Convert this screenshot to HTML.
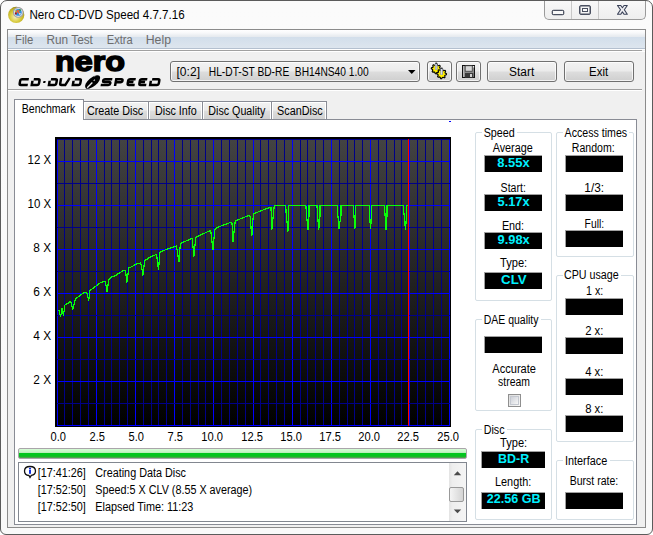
<!DOCTYPE html>
<html><head><meta charset="utf-8">
<style>
*{margin:0;padding:0;box-sizing:border-box}
html,body{width:653px;height:535px;overflow:hidden;background:#fff}
body{position:relative;font-family:"Liberation Sans",sans-serif;font-size:11px;color:#000}
.a{position:absolute}
#frame{left:0;top:0;width:653px;height:535px;border:1px solid #5b5b5b;border-radius:7px 7px 6px 6px;background:linear-gradient(#fbfbfb,#f9f9f9)}
#client{left:7px;top:29px;width:639px;height:499px;border:1px solid #8b8b8b;background:#f0f0f0}
#menubar{left:8px;top:30px;width:637px;height:18px;background:linear-gradient(#ffffff 0px,#f7f8fa 3px,#e8ecf0 6px,#e6eaef 7px,#d2deeb 7px,#d6e1ec 11px,#dde5ee 18px)}
.btn{position:absolute;border:1px solid #707070;border-radius:3px;background:linear-gradient(#f2f2f2 0%,#ebebeb 48%,#dddddd 52%,#cfcfcf 100%);box-shadow:inset 0 0 0 1px rgba(255,255,255,.75)}
.tab{position:absolute;border:1px solid #898c95;border-bottom:none;background:linear-gradient(#f2f2f2 0%,#ebebeb 45%,#dddddd 52%,#cfcfcf 100%);box-shadow:inset 1px 1px 0 #fff, inset -1px 0 0 #fff}
.grp{position:absolute;border:1px solid #d5dfe5;border-radius:2px}
.lgd{position:absolute;background:#fff;height:8px}
.blk{position:absolute;background:#000;border-top:1px solid #a0a0a0;border-left:1px solid #a0a0a0}
</style></head><body>
<div id="frame" class="a"></div>
<!-- caption buttons -->
<div class="a" style="left:544px;top:1px;width:102px;height:19px;border:1px solid #9a9a9a;border-top:none;border-radius:0 0 5px 5px;background:linear-gradient(#f8f8f8,#eeeeee)"></div>
<div class="a" style="left:571px;top:1px;width:1px;height:18px;background:#c8c8c8"></div>
<div class="a" style="left:598px;top:1px;width:1px;height:18px;background:#c8c8c8"></div>
<div class="a" style="left:552px;top:10px;width:12px;height:5px;border:1px solid #4a5060;border-radius:1.5px;background:#f8f8f8;box-shadow:0 0 0 0.3px #4a5060"></div>
<div class="a" style="left:579px;top:5px;width:12px;height:10px;border:1px solid #4a5060;border-radius:2px;background:#f4f4f4;box-shadow:inset 0 0 0 0.5px #4a5060"></div>
<div class="a" style="left:582px;top:8px;width:6px;height:4px;border:1px solid #4a5060;background:#fafafa"></div>
<svg class="a" style="left:0;top:0" width="653" height="30"><path d="M617.5,5.5 H620.8 L622.4,7.7 L624,5.5 H627.3 L624.3,9.8 L627.3,14.2 H624 L622.4,11.9 L620.8,14.2 H617.5 L620.5,9.8 Z" fill="#eeeef2" stroke="#3a4258" stroke-width="1.1" stroke-linejoin="round"/></svg>
<!-- app icon -->
<svg class="a" style="left:0;top:0" width="30" height="30">
<defs><radialGradient id="gold" cx="0.45" cy="0.62" r="0.6"><stop offset="0" stop-color="#f6f0c0"/><stop offset="0.5" stop-color="#dccf48"/><stop offset="0.85" stop-color="#c0b020"/><stop offset="1" stop-color="#9a8a18"/></radialGradient></defs>
<circle cx="16.2" cy="14.9" r="8.1" fill="url(#gold)"/>
<circle cx="18.3" cy="12.4" r="4.8" fill="#eeeef0" stroke="#a0a0a8" stroke-width="1.1"/>
<circle cx="18.3" cy="12.4" r="3.4" fill="#2e8ee0"/>
<path d="M17,10 L19.8,14.2 M15.8,12.8 L19.6,10.2" stroke="#f06030" stroke-width="1.3"/>
<circle cx="15.8" cy="13.6" r="1" fill="#b01010"/>
<circle cx="15.6" cy="11.3" r="0.7" fill="#f0d000"/>
<path d="M19.2,9.6 L21,10.4" stroke="#30a040" stroke-width="1.2"/>
<circle cx="19.9" cy="13.9" r="0.8" fill="#ffffff"/>
</svg>
<div id="client" class="a"></div>
<div id="menubar" class="a"></div>
<div class="a" style="left:8px;top:48px;width:637px;height:1px;background:#b4c0cf"></div>
<div class="a" style="left:8px;top:49px;width:637px;height:1px;background:#fff"></div>
<div class="a" style="left:8px;top:50px;width:634px;height:1px;background:#a0a0a0"></div>
<div class="a" style="left:8px;top:51px;width:637px;height:1px;background:#fff"></div>
<!-- combo & buttons -->
<div class="btn" style="left:170px;top:61px;width:250px;height:21px"></div>
<svg class="a" style="left:408px;top:70px" width="9" height="5"><path d="M0 0 L7.5 0 L3.75 4 Z" fill="#000"/></svg>
<div class="btn" style="left:427px;top:61px;width:25px;height:21px"></div>
<div class="btn" style="left:456px;top:61px;width:25px;height:21px"></div>
<div class="btn" style="left:487px;top:61px;width:70px;height:21px"></div>
<div class="btn" style="left:564px;top:61px;width:70px;height:21px"></div>
<!-- separator -->
<div class="a" style="left:8px;top:89px;width:634px;height:1px;background:#a0a0a0"></div>
<div class="a" style="left:8px;top:90px;width:634px;height:1px;background:#fff"></div>
<!-- tabs -->
<div class="tab" style="left:83px;top:101px;width:66px;height:19px"></div>
<div class="tab" style="left:148px;top:101px;width:55px;height:19px"></div>
<div class="tab" style="left:202px;top:101px;width:70px;height:19px"></div>
<div class="tab" style="left:271px;top:101px;width:56px;height:19px"></div>
<div class="a" style="left:14px;top:119px;width:623px;height:406px;border:1px solid #898c95;background:#fff"></div>
<div class="a" style="left:14px;top:99px;width:70px;height:21px;border:1px solid #898c95;border-bottom:none;background:#fff"></div>
<!-- chart -->
<div class="a" style="left:55px;top:137px;width:396px;height:290px;background:#000"></div>
<div class="a" style="left:57px;top:139px;width:393px;height:287px;background:linear-gradient(#434343,#000000)"></div>
<!-- progress -->
<div class="a" style="left:18px;top:448px;width:449px;height:11px;border:1px solid #aaa4aa;border-radius:2px;background:linear-gradient(#d6fcd6 0px,#c4f4c4 3px,#b0eab0 4px,#00c81e 4px,#06c21e 7px,#28b02e 8px,#60a062 9px)"></div>
<!-- log -->
<div class="a" style="left:18px;top:462px;width:449px;height:60px;border:1px solid #828790;background:#fff"></div>
<div class="a" style="left:449px;top:463px;width:17px;height:58px;background:linear-gradient(90deg,#e3e3e3,#eeeeee 20%,#f5f5f5)"></div>
<div class="a" style="left:449px;top:487px;width:15px;height:15px;border:1px solid #999;border-radius:2px;background:linear-gradient(90deg,#f4f4f4,#e4e4e4 50%,#d4d4d4)"></div>
<svg class="a" style="left:453px;top:471px" width="9" height="5"><path d="M0.8 4.2 L4.5 0.3 L8.2 4.2Z" fill="#4a4a4a"/></svg>
<svg class="a" style="left:453px;top:509px" width="9" height="5"><path d="M0.8 0.4 L4.5 4.3 L8.2 0.4Z" fill="#4a4a4a"/></svg>
<!-- right panels -->
<div class="grp" style="left:475px;top:132px;width:77px;height:169px"></div>
<div class="lgd" style="left:482px;top:128px;width:35px"></div>
<div class="grp" style="left:556px;top:132px;width:78px;height:125px"></div>
<div class="lgd" style="left:563px;top:128px;width:66px"></div>
<div class="grp" style="left:556px;top:275px;width:78px;height:167px"></div>
<div class="lgd" style="left:563px;top:271px;width:58px"></div>
<div class="grp" style="left:475px;top:319px;width:77px;height:92px"></div>
<div class="lgd" style="left:482px;top:315px;width:59px"></div>
<div class="a" style="left:508px;top:394px;width:13px;height:13px;border:1px solid #8f8f8f;background:linear-gradient(135deg,#dcdcdc,#f8f8f8)"></div>
<div class="a" style="left:510px;top:396px;width:9px;height:9px;border:1px solid #c4c8d0;background:linear-gradient(135deg,#cdd0d8,#f6f6f6)"></div>
<div class="grp" style="left:475px;top:429px;width:77px;height:91px"></div>
<div class="lgd" style="left:482px;top:425px;width:25px"></div>
<div class="grp" style="left:556px;top:460px;width:78px;height:60px"></div>
<div class="lgd" style="left:563px;top:456px;width:47px"></div>

<div class="blk" style="left:484px;top:155px;width:58px;height:17px"></div>
<div class="blk" style="left:484px;top:194px;width:58px;height:17px"></div>
<div class="blk" style="left:484px;top:232px;width:58px;height:17px"></div>
<div class="blk" style="left:484px;top:272px;width:58px;height:17px"></div>
<div class="blk" style="left:565px;top:155px;width:58px;height:17px"></div>
<div class="blk" style="left:565px;top:194px;width:58px;height:17px"></div>
<div class="blk" style="left:565px;top:230px;width:58px;height:17px"></div>
<div class="blk" style="left:565px;top:298px;width:58px;height:17px"></div>
<div class="blk" style="left:565px;top:337px;width:58px;height:17px"></div>
<div class="blk" style="left:565px;top:378px;width:58px;height:17px"></div>
<div class="blk" style="left:565px;top:415px;width:58px;height:17px"></div>
<div class="blk" style="left:484px;top:336px;width:58px;height:17px"></div>
<div class="blk" style="left:481px;top:451px;width:64px;height:17px"></div>
<div class="blk" style="left:481px;top:492px;width:64px;height:17px"></div>
<div class="blk" style="left:565px;top:492px;width:58px;height:17px"></div>
<svg class="a" style="left:0;top:0" width="653" height="535" font-family="Liberation Sans">
<rect x="57" y="139" width="1" height="287" fill="#0000ff"/>
<rect x="64" y="139" width="1" height="287" fill="#000088"/>
<rect x="72" y="139" width="1" height="287" fill="#000088"/>
<rect x="80" y="139" width="1" height="287" fill="#000088"/>
<rect x="88" y="139" width="1" height="287" fill="#000088"/>
<rect x="96" y="139" width="1" height="287" fill="#0000ff"/>
<rect x="104" y="139" width="1" height="287" fill="#000088"/>
<rect x="111" y="139" width="1" height="287" fill="#000088"/>
<rect x="119" y="139" width="1" height="287" fill="#000088"/>
<rect x="127" y="139" width="1" height="287" fill="#000088"/>
<rect x="135" y="139" width="1" height="287" fill="#0000ff"/>
<rect x="143" y="139" width="1" height="287" fill="#000088"/>
<rect x="151" y="139" width="1" height="287" fill="#000088"/>
<rect x="158" y="139" width="1" height="287" fill="#000088"/>
<rect x="166" y="139" width="1" height="287" fill="#000088"/>
<rect x="174" y="139" width="1" height="287" fill="#0000ff"/>
<rect x="182" y="139" width="1" height="287" fill="#000088"/>
<rect x="190" y="139" width="1" height="287" fill="#000088"/>
<rect x="198" y="139" width="1" height="287" fill="#000088"/>
<rect x="205" y="139" width="1" height="287" fill="#000088"/>
<rect x="213" y="139" width="1" height="287" fill="#0000ff"/>
<rect x="221" y="139" width="1" height="287" fill="#000088"/>
<rect x="229" y="139" width="1" height="287" fill="#000088"/>
<rect x="237" y="139" width="1" height="287" fill="#000088"/>
<rect x="245" y="139" width="1" height="287" fill="#000088"/>
<rect x="253" y="139" width="1" height="287" fill="#0000ff"/>
<rect x="260" y="139" width="1" height="287" fill="#000088"/>
<rect x="268" y="139" width="1" height="287" fill="#000088"/>
<rect x="276" y="139" width="1" height="287" fill="#000088"/>
<rect x="284" y="139" width="1" height="287" fill="#000088"/>
<rect x="292" y="139" width="1" height="287" fill="#0000ff"/>
<rect x="300" y="139" width="1" height="287" fill="#000088"/>
<rect x="307" y="139" width="1" height="287" fill="#000088"/>
<rect x="315" y="139" width="1" height="287" fill="#000088"/>
<rect x="323" y="139" width="1" height="287" fill="#000088"/>
<rect x="331" y="139" width="1" height="287" fill="#0000ff"/>
<rect x="339" y="139" width="1" height="287" fill="#000088"/>
<rect x="347" y="139" width="1" height="287" fill="#000088"/>
<rect x="354" y="139" width="1" height="287" fill="#000088"/>
<rect x="362" y="139" width="1" height="287" fill="#000088"/>
<rect x="370" y="139" width="1" height="287" fill="#0000ff"/>
<rect x="378" y="139" width="1" height="287" fill="#000088"/>
<rect x="386" y="139" width="1" height="287" fill="#000088"/>
<rect x="394" y="139" width="1" height="287" fill="#000088"/>
<rect x="401" y="139" width="1" height="287" fill="#000088"/>
<rect x="409" y="139" width="1" height="287" fill="#0000ff"/>
<rect x="417" y="139" width="1" height="287" fill="#000088"/>
<rect x="425" y="139" width="1" height="287" fill="#000088"/>
<rect x="433" y="139" width="1" height="287" fill="#000088"/>
<rect x="441" y="139" width="1" height="287" fill="#000088"/>
<rect x="449" y="139" width="1" height="287" fill="#0000ff"/>
<rect x="57" y="139" width="393" height="1" fill="#000088"/>
<rect x="57" y="161" width="393" height="1" fill="#0000ff"/>
<rect x="57" y="183" width="393" height="1" fill="#000088"/>
<rect x="57" y="205" width="393" height="1" fill="#0000ff"/>
<rect x="57" y="227" width="393" height="1" fill="#000088"/>
<rect x="57" y="249" width="393" height="1" fill="#0000ff"/>
<rect x="57" y="271" width="393" height="1" fill="#000088"/>
<rect x="57" y="293" width="393" height="1" fill="#0000ff"/>
<rect x="57" y="315" width="393" height="1" fill="#000088"/>
<rect x="57" y="337" width="393" height="1" fill="#0000ff"/>
<rect x="57" y="359" width="393" height="1" fill="#000088"/>
<rect x="57" y="381" width="393" height="1" fill="#0000ff"/>
<rect x="57" y="403" width="393" height="1" fill="#000088"/>
<rect x="57" y="425" width="393" height="1" fill="#0000ff"/>
<rect x="408" y="139" width="1" height="287" fill="#ff0000"/>
<rect x="449" y="121" width="2" height="1" fill="#0000ff"/>
<polyline points="57.1,311.5 58.4,310.3 60.2,316.6 61.6,308.1 63.0,315.7 64.3,305.2 65.5,304.5 70.2,301.4 72.3,309.4 74.8,298.9 82.8,293.0 85.7,292.2 86.5,293.0 88.2,300.6 89.5,290.5 95.0,286.3 100.5,282.2 104.6,281.7 105.5,285.0 106.5,291.8 108.3,279.4 111.1,277.1 114.8,275.7 121.7,271.1 124.9,270.2 126.4,282.6 128.3,267.9 131.8,266.5 136.4,263.8 140.0,262.9 141.0,265.6 142.3,275.7 144.2,260.6 149.2,257.4 156.0,254.3 158.0,269.5 159.5,252.3 165.9,249.4 175.9,245.9 178.4,261.8 179.9,243.4 191.8,238.4 193.3,256.8 195.3,237.4 205.7,232.4 210.2,230.4 212.5,250.3 214.2,229.5 217.5,227.2 230.4,222.3 231.5,223.0 232.5,242.2 234.7,220.7 237.9,219.7 248.6,215.4 249.5,216.0 251.3,236.3 252.9,213.8 269.5,207.3 270.5,207.3 271.3,230.4 273.8,205.5 285.2,205.5 285.6,212.5 287.4,231.8 288.3,215.5 288.3,205.5 305.4,205.5 305.8,212.5 307.5,229.9 308.5,215.5 308.5,205.5 316.5,205.5 316.9,212.5 318.3,229.9 319.5,215.5 319.5,205.5 336.7,205.5 337.1,212.5 338.5,228.7 340.4,215.5 340.4,205.5 352.8,205.5 353.2,212.5 354.4,228.7 355.2,215.5 355.2,205.5 368.7,205.5 369.1,212.5 369.9,229.3 371.2,215.5 371.2,205.5 384.0,205.5 384.4,212.5 385.5,229.9 386.5,215.5 386.5,205.5 403.0,205.5 403.4,212.5 405.0,230.0 406.0,215.5 406.0,205.5 407.5,205.5" transform="translate(0.5,0)" fill="none" stroke="#08ff08" stroke-width="1.2" shape-rendering="crispEdges"/>
<!-- nero logo -->
<text x="55" y="70.6" font-size="28" font-weight="bold" textLength="70" lengthAdjust="spacingAndGlyphs" stroke="#000" stroke-width="1.5">nero</text>
<g transform="translate(0,77.9) skewX(-10)" fill="none" stroke="#000" stroke-width="2.5"><path d="M29.0,1.225 H22.270881241809416 Q20.670881241809415,1.225 20.670881241809415,2.825 V5.375 Q20.670881241809415,6.975 22.270881241809416,6.975 H29.0"/><path d="M33.970881241809415,1.225 H38.375 Q39.975,1.225 39.975,2.825 V5.375 Q39.975,6.975 38.375,6.975 H31.745881241809414 M32.970881241809415,6.975 V2.825"/><path d="M51.17088124180941,1.225 H55.675 Q57.275,1.225 57.275,2.825 V5.375 Q57.275,6.975 55.675,6.975 H48.94588124180941 M50.17088124180941,6.975 V2.825"/><path d="M61.17088124180941,0 V5.375 Q61.17088124180941,6.975 62.77088124180941,6.975 H66.575 L69.775,0.1"/><path d="M75.07088124180942,1.225 H79.67500000000001 Q81.275,1.225 81.275,2.825 V5.375 Q81.275,6.975 79.67500000000001,6.975 H72.84588124180942 M74.07088124180942,6.975 V2.825"/><path d="M112.5,1.225 H105.2708812418094 Q103.67088124180941,1.225 103.67088124180941,2.825 Q103.67088124180941,4.1 105.2708812418094,4.1 H109.67500000000001 Q111.275,4.1 111.275,5.699999999999999 Q111.275,6.975 109.67500000000001,6.975 H101.94588124180942"/><path d="M116.47088124180941,8.2 V1.225 H121.37500000000001 Q122.97500000000001,1.225 122.97500000000001,2.825 V2.7999999999999994 Q122.97500000000001,4.3999999999999995 121.37500000000001,4.3999999999999995 H117.47088124180941"/><path d="M135.9,1.225 H130.2708812418094 Q128.6708812418094,1.225 128.6708812418094,2.825 V5.375 Q128.6708812418094,6.975 130.2708812418094,6.975 H135.9 M128.6708812418094,4.1 H134.175"/><path d="M147.5,1.225 H141.9708812418094 Q140.3708812418094,1.225 140.3708812418094,2.825 V5.375 Q140.3708812418094,6.975 141.9708812418094,6.975 H147.5 M140.3708812418094,4.1 H145.775"/><path d="M152.3708812418094,1.225 H158.175 Q159.775,1.225 159.775,2.825 V5.375 Q159.775,6.975 158.175,6.975 H150.1458812418094 M151.3708812418094,6.975 V2.825"/><rect x="44" y="3" width="2.2" height="2.2" fill="#000" stroke="none"/></g>
<g transform="translate(92.6,82) rotate(-40)">
  <ellipse cx="0" cy="0" rx="9.2" ry="4.3" fill="#000"/>
  <path d="M-7.8,0.9 L-0.5,0.2" stroke="#f0f0f0" stroke-width="1.3"/>
  <path d="M1.5,-0.1 L3.2,-0.3" stroke="#d8d8d8" stroke-width="1"/>
  <path d="M5,-3.2 L7,-2.9" stroke="#b0b0b0" stroke-width="0.8"/>
</g>
<!-- gears icon -->
<path d="M441.10,68.80 L441.01,69.76 L439.62,70.22 L439.28,70.86 L439.66,72.26 L438.92,72.87 L437.62,72.22 L436.92,72.43 L436.20,73.70 L435.24,73.61 L434.78,72.22 L434.14,71.88 L432.74,72.26 L432.13,71.52 L432.78,70.22 L432.57,69.52 L431.30,68.80 L431.39,67.84 L432.78,67.38 L433.12,66.74 L432.74,65.34 L433.48,64.73 L434.78,65.38 L435.48,65.17 L436.20,63.90 L437.16,63.99 L437.62,65.38 L438.26,65.72 L439.66,65.34 L440.27,66.08 L439.62,67.38 L439.83,68.08 Z" fill="#fff000" stroke="#000" stroke-width="1.1" stroke-linejoin="round"/>
<rect x="434.9" y="63.2" width="2.6" height="6.6" fill="#9098a8"/><rect x="435.6" y="64" width="1" height="5.5" fill="#d8dce8"/><rect x="435.3" y="62.6" width="1.8" height="1.2" fill="#222"/>
<path d="M446.50,73.80 L446.41,74.76 L445.02,75.22 L444.68,75.86 L445.06,77.26 L444.32,77.87 L443.02,77.22 L442.32,77.43 L441.60,78.70 L440.64,78.61 L440.18,77.22 L439.54,76.88 L438.14,77.26 L437.53,76.52 L438.18,75.22 L437.97,74.52 L436.70,73.80 L436.79,72.84 L438.18,72.38 L438.52,71.74 L438.14,70.34 L438.88,69.73 L440.18,70.38 L440.88,70.17 L441.60,68.90 L442.56,68.99 L443.02,70.38 L443.66,70.72 L445.06,70.34 L445.67,71.08 L445.02,72.38 L445.23,73.08 Z" fill="#fff000" stroke="#000" stroke-width="1.1" stroke-linejoin="round"/>
<rect x="440.3" y="68.2" width="2.6" height="6.6" fill="#9098a8"/><rect x="441" y="69" width="1" height="5.5" fill="#d8dce8"/><rect x="440.7" y="67.6" width="1.8" height="1.2" fill="#222"/>
<!-- floppy -->
<rect x="462.5" y="65.5" width="12" height="12" fill="#8a8a8a" stroke="#111" stroke-width="1"/>
<rect x="463" y="66" width="1.2" height="11" fill="#b8b8b8"/>
<rect x="465.2" y="65.8" width="7" height="5.4" fill="#d8d8d8" stroke="#333" stroke-width="0.7"/>
<rect x="465" y="73" width="8.3" height="4.7" fill="#3a3a3a"/>
<rect x="470" y="74" width="2" height="3" fill="#d0d0d0"/>
<rect x="473" y="66.2" width="1.2" height="1.2" fill="#fff"/>
<!-- info icon -->
<path d="M30,466.5 C26.5,466.5 24.5,468.5 24.5,471 C24.5,473.5 26.5,475.3 29,475.5 L30,477.5 L31.3,475.4 C34,475 35.5,473.3 35.5,471 C35.5,468.5 33.5,466.5 30,466.5 Z" fill="#fff" stroke="#111" stroke-width="1.3"/>
<rect x="29" y="467.8" width="2" height="1.5" fill="#1030e0"/>
<rect x="29" y="469.8" width="2" height="4" fill="#1030e0"/>
<text x="29.5" y="18.9" textLength="155.1" lengthAdjust="spacingAndGlyphs" font-size="12" font-weight="normal" fill="#000" xml:space="preserve">Nero CD-DVD Speed 4.7.7.16</text>
<text x="15.0" y="43.8" textLength="18.2" lengthAdjust="spacingAndGlyphs" font-size="12" font-weight="normal" fill="#6d6d6d" xml:space="preserve">File</text>
<text x="46.5" y="43.8" textLength="46.4" lengthAdjust="spacingAndGlyphs" font-size="12" font-weight="normal" fill="#6d6d6d" xml:space="preserve">Run Test</text>
<text x="106.8" y="43.8" textLength="25.9" lengthAdjust="spacingAndGlyphs" font-size="12" font-weight="normal" fill="#6d6d6d" xml:space="preserve">Extra</text>
<text x="145.7" y="43.8" textLength="25.3" lengthAdjust="spacingAndGlyphs" font-size="12" font-weight="normal" fill="#6d6d6d" xml:space="preserve">Help</text>
<text x="176.5" y="75.8" textLength="23.5" lengthAdjust="spacingAndGlyphs" font-size="12" font-weight="normal" fill="#000" xml:space="preserve">[0:2]</text>
<text x="208.8" y="75.8" textLength="159.9" lengthAdjust="spacingAndGlyphs" font-size="12" font-weight="normal" fill="#000" xml:space="preserve">HL-DT-ST BD-RE  BH14NS40 1.00</text>
<text x="509.1" y="76.0" textLength="25.1" lengthAdjust="spacingAndGlyphs" font-size="12" font-weight="normal" fill="#000" xml:space="preserve">Start</text>
<text x="589.1" y="76.0" textLength="19.1" lengthAdjust="spacingAndGlyphs" font-size="12" font-weight="normal" fill="#000" xml:space="preserve">Exit</text>
<text x="21.8" y="112.5" textLength="53.5" lengthAdjust="spacingAndGlyphs" font-size="12" font-weight="normal" fill="#000" xml:space="preserve">Benchmark</text>
<text x="87.0" y="114.7" textLength="56.2" lengthAdjust="spacingAndGlyphs" font-size="12" font-weight="normal" fill="#000" xml:space="preserve">Create Disc</text>
<text x="155.0" y="114.7" textLength="41.8" lengthAdjust="spacingAndGlyphs" font-size="12" font-weight="normal" fill="#000" xml:space="preserve">Disc Info</text>
<text x="208.3" y="114.7" textLength="57.1" lengthAdjust="spacingAndGlyphs" font-size="12" font-weight="normal" fill="#000" xml:space="preserve">Disc Quality</text>
<text x="277.0" y="114.7" textLength="45.7" lengthAdjust="spacingAndGlyphs" font-size="12" font-weight="normal" fill="#000" xml:space="preserve">ScanDisc</text>
<text x="27.5" y="164.0" textLength="23.6" lengthAdjust="spacingAndGlyphs" font-size="12" font-weight="normal" fill="#000" xml:space="preserve">12 X</text>
<text x="27.5" y="208.0" textLength="23.6" lengthAdjust="spacingAndGlyphs" font-size="12" font-weight="normal" fill="#000" xml:space="preserve">10 X</text>
<text x="33.3" y="252.0" textLength="17.8" lengthAdjust="spacingAndGlyphs" font-size="12" font-weight="normal" fill="#000" xml:space="preserve">8 X</text>
<text x="33.3" y="296.0" textLength="17.8" lengthAdjust="spacingAndGlyphs" font-size="12" font-weight="normal" fill="#000" xml:space="preserve">6 X</text>
<text x="33.3" y="340.0" textLength="17.8" lengthAdjust="spacingAndGlyphs" font-size="12" font-weight="normal" fill="#000" xml:space="preserve">4 X</text>
<text x="33.3" y="384.0" textLength="17.8" lengthAdjust="spacingAndGlyphs" font-size="12" font-weight="normal" fill="#000" xml:space="preserve">2 X</text>
<text x="50.6" y="440.9" textLength="15.4" lengthAdjust="spacingAndGlyphs" font-size="12" font-weight="normal" fill="#000" xml:space="preserve">0.0</text>
<text x="89.6" y="440.9" textLength="15.4" lengthAdjust="spacingAndGlyphs" font-size="12" font-weight="normal" fill="#000" xml:space="preserve">2.5</text>
<text x="128.6" y="440.9" textLength="15.4" lengthAdjust="spacingAndGlyphs" font-size="12" font-weight="normal" fill="#000" xml:space="preserve">5.0</text>
<text x="167.6" y="440.9" textLength="15.4" lengthAdjust="spacingAndGlyphs" font-size="12" font-weight="normal" fill="#000" xml:space="preserve">7.5</text>
<text x="201.3" y="440.9" textLength="21.7" lengthAdjust="spacingAndGlyphs" font-size="12" font-weight="normal" fill="#000" xml:space="preserve">10.0</text>
<text x="241.3" y="440.9" textLength="21.7" lengthAdjust="spacingAndGlyphs" font-size="12" font-weight="normal" fill="#000" xml:space="preserve">12.5</text>
<text x="280.3" y="440.9" textLength="21.7" lengthAdjust="spacingAndGlyphs" font-size="12" font-weight="normal" fill="#000" xml:space="preserve">15.0</text>
<text x="319.3" y="440.9" textLength="21.7" lengthAdjust="spacingAndGlyphs" font-size="12" font-weight="normal" fill="#000" xml:space="preserve">17.5</text>
<text x="358.3" y="440.9" textLength="21.7" lengthAdjust="spacingAndGlyphs" font-size="12" font-weight="normal" fill="#000" xml:space="preserve">20.0</text>
<text x="397.3" y="440.9" textLength="21.7" lengthAdjust="spacingAndGlyphs" font-size="12" font-weight="normal" fill="#000" xml:space="preserve">22.5</text>
<text x="437.3" y="440.9" textLength="21.7" lengthAdjust="spacingAndGlyphs" font-size="12" font-weight="normal" fill="#000" xml:space="preserve">25.0</text>
<text x="37.7" y="477.3" textLength="48.1" lengthAdjust="spacingAndGlyphs" font-size="12" font-weight="normal" fill="#000" xml:space="preserve">[17:41:26]</text>
<text x="37.7" y="494.2" textLength="48.1" lengthAdjust="spacingAndGlyphs" font-size="12" font-weight="normal" fill="#000" xml:space="preserve">[17:52:50]</text>
<text x="37.7" y="511.0" textLength="48.1" lengthAdjust="spacingAndGlyphs" font-size="12" font-weight="normal" fill="#000" xml:space="preserve">[17:52:50]</text>
<text x="95.3" y="477.3" textLength="90.7" lengthAdjust="spacingAndGlyphs" font-size="12" font-weight="normal" fill="#000" xml:space="preserve">Creating Data Disc</text>
<text x="95.3" y="494.2" textLength="156.9" lengthAdjust="spacingAndGlyphs" font-size="12" font-weight="normal" fill="#000" xml:space="preserve">Speed:5 X CLV (8.55 X average)</text>
<text x="95.3" y="511.0" textLength="98.0" lengthAdjust="spacingAndGlyphs" font-size="12" font-weight="normal" fill="#000" xml:space="preserve">Elapsed Time: 11:23</text>
<text x="483.7" y="136.6" textLength="31.1" lengthAdjust="spacingAndGlyphs" font-size="12" font-weight="normal" fill="#000" xml:space="preserve">Speed</text>
<text x="564.6" y="136.7" textLength="62.5" lengthAdjust="spacingAndGlyphs" font-size="12" font-weight="normal" fill="#000" xml:space="preserve">Access times</text>
<text x="492.7" y="152.4" textLength="40.0" lengthAdjust="spacingAndGlyphs" font-size="12" font-weight="normal" fill="#000" xml:space="preserve">Average</text>
<text x="571.8" y="152.3" textLength="42.9" lengthAdjust="spacingAndGlyphs" font-size="12" font-weight="normal" fill="#000" xml:space="preserve">Random:</text>
<text x="500.6" y="191.9" textLength="25.3" lengthAdjust="spacingAndGlyphs" font-size="12" font-weight="normal" fill="#000" xml:space="preserve">Start:</text>
<text x="584.3" y="191.8" textLength="19.8" lengthAdjust="spacingAndGlyphs" font-size="12" font-weight="normal" fill="#000" xml:space="preserve">1/3:</text>
<text x="501.9" y="229.7" textLength="22.2" lengthAdjust="spacingAndGlyphs" font-size="12" font-weight="normal" fill="#000" xml:space="preserve">End:</text>
<text x="584.6" y="227.5" textLength="19.5" lengthAdjust="spacingAndGlyphs" font-size="12" font-weight="normal" fill="#000" xml:space="preserve">Full:</text>
<text x="500.0" y="267.0" textLength="27.2" lengthAdjust="spacingAndGlyphs" font-size="12" font-weight="normal" fill="#000" xml:space="preserve">Type:</text>
<text x="564.0" y="279.4" textLength="54.7" lengthAdjust="spacingAndGlyphs" font-size="12" font-weight="normal" fill="#000" xml:space="preserve">CPU usage</text>
<text x="586.0" y="295.4" textLength="17.3" lengthAdjust="spacingAndGlyphs" font-size="12" font-weight="normal" fill="#000" xml:space="preserve">1 x:</text>
<text x="585.2" y="334.6" textLength="18.2" lengthAdjust="spacingAndGlyphs" font-size="12" font-weight="normal" fill="#000" xml:space="preserve">2 x:</text>
<text x="585.2" y="375.7" textLength="18.2" lengthAdjust="spacingAndGlyphs" font-size="12" font-weight="normal" fill="#000" xml:space="preserve">4 x:</text>
<text x="585.2" y="412.5" textLength="18.2" lengthAdjust="spacingAndGlyphs" font-size="12" font-weight="normal" fill="#000" xml:space="preserve">8 x:</text>
<text x="483.7" y="324.0" textLength="54.8" lengthAdjust="spacingAndGlyphs" font-size="12" font-weight="normal" fill="#000" xml:space="preserve">DAE quality</text>
<text x="492.3" y="372.7" textLength="43.7" lengthAdjust="spacingAndGlyphs" font-size="12" font-weight="normal" fill="#000" xml:space="preserve">Accurate</text>
<text x="498.1" y="385.6" textLength="31.8" lengthAdjust="spacingAndGlyphs" font-size="12" font-weight="normal" fill="#000" xml:space="preserve">stream</text>
<text x="483.7" y="433.5" textLength="20.9" lengthAdjust="spacingAndGlyphs" font-size="12" font-weight="normal" fill="#000" xml:space="preserve">Disc</text>
<text x="500.1" y="446.8" textLength="27.1" lengthAdjust="spacingAndGlyphs" font-size="12" font-weight="normal" fill="#000" xml:space="preserve">Type:</text>
<text x="495.0" y="485.9" textLength="36.3" lengthAdjust="spacingAndGlyphs" font-size="12" font-weight="normal" fill="#000" xml:space="preserve">Length:</text>
<text x="564.9" y="464.6" textLength="42.3" lengthAdjust="spacingAndGlyphs" font-size="12" font-weight="normal" fill="#000" xml:space="preserve">Interface</text>
<text x="569.7" y="485.4" textLength="48.5" lengthAdjust="spacingAndGlyphs" font-size="12" font-weight="normal" fill="#000" xml:space="preserve">Burst rate:</text>
<text x="497.3" y="166.6" textLength="32.4" lengthAdjust="spacingAndGlyphs" font-size="12" font-weight="bold" fill="#00f0ff" xml:space="preserve">8.55x</text>
<text x="497.6" y="205.7" textLength="32.0" lengthAdjust="spacingAndGlyphs" font-size="12" font-weight="bold" fill="#00f0ff" xml:space="preserve">5.17x</text>
<text x="497.6" y="243.8" textLength="32.1" lengthAdjust="spacingAndGlyphs" font-size="12" font-weight="bold" fill="#00f0ff" xml:space="preserve">9.98x</text>
<text x="501.1" y="284.3" textLength="25.6" lengthAdjust="spacingAndGlyphs" font-size="12" font-weight="bold" fill="#00f0ff" xml:space="preserve">CLV</text>
<text x="498.1" y="462.7" textLength="31.2" lengthAdjust="spacingAndGlyphs" font-size="12" font-weight="bold" fill="#00f0ff" xml:space="preserve">BD-R</text>
<text x="486.8" y="503.3" textLength="53.8" lengthAdjust="spacingAndGlyphs" font-size="12" font-weight="bold" fill="#00f0ff" xml:space="preserve">22.56 GB</text>
</svg>
</body></html>
